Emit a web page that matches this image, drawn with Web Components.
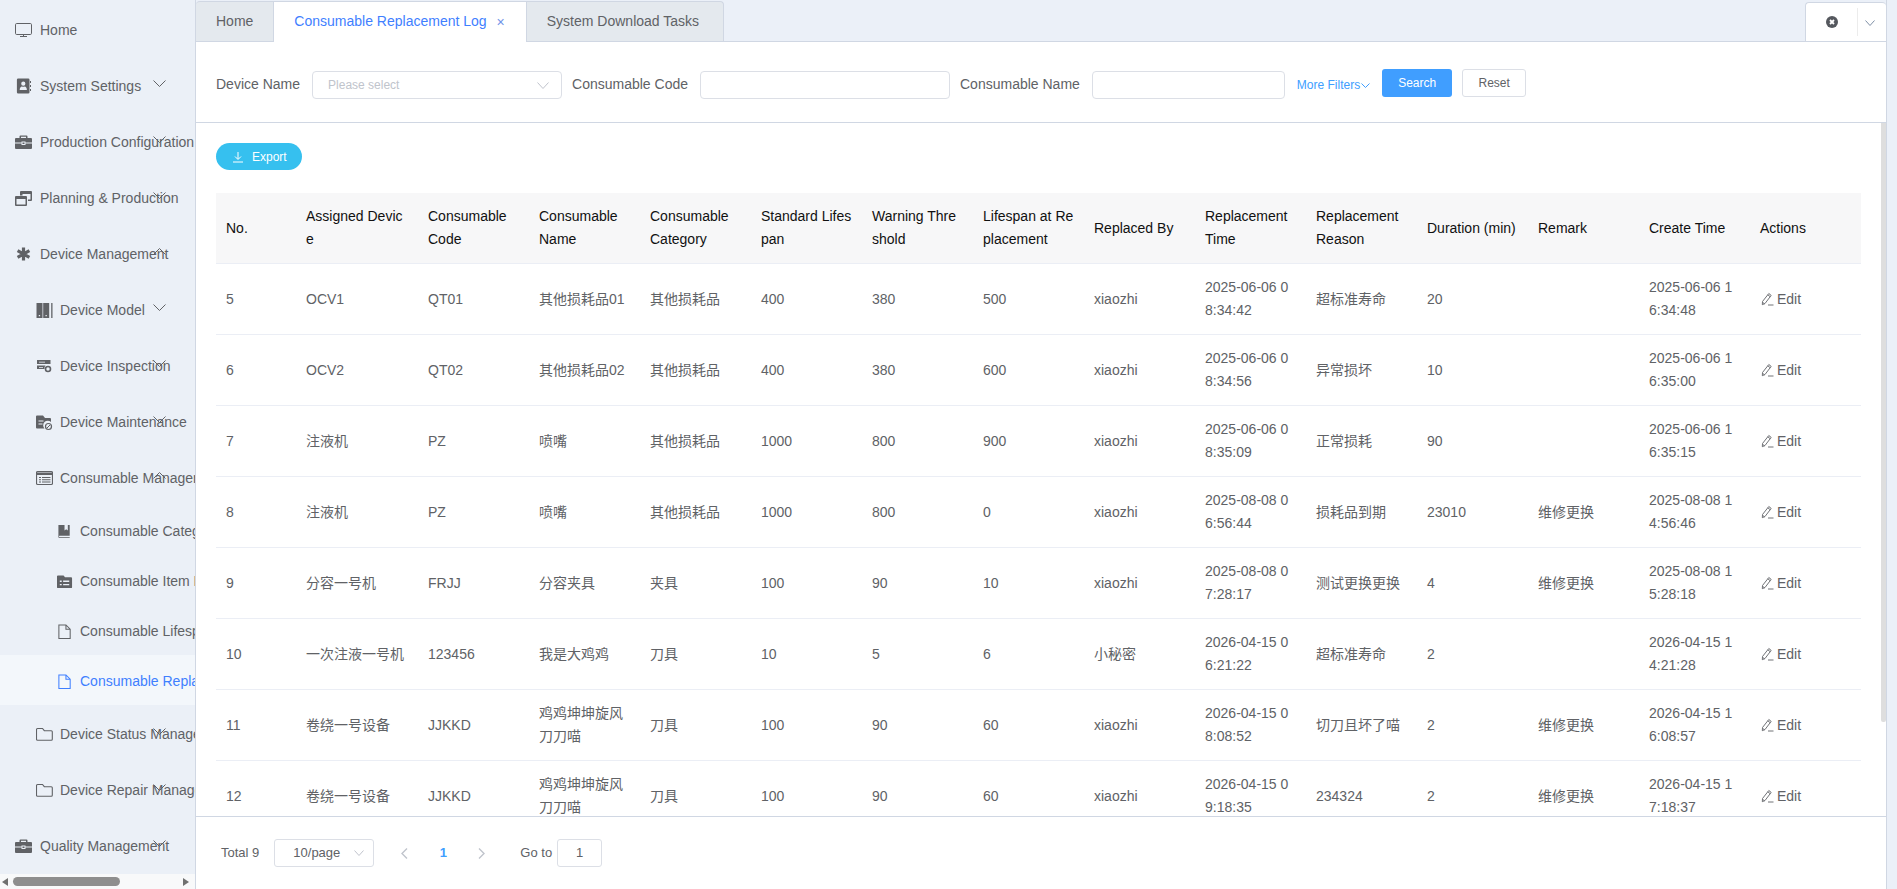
<!DOCTYPE html>
<html lang="en">
<head>
<meta charset="utf-8">
<title>Consumable Replacement Log</title>
<style>
  html, body { margin: 0; height: 100%; overflow: hidden; background: #ebf0f8; }
  body { font: 14px/1.4 "Liberation Sans", "Noto Sans CJK SC", sans-serif; color: #606266; }
</style>
</head>
<body>
<app-shell>
  <side-nav slot="nav">
    <nav-item icon="monitor">Home</nav-item>
    <nav-item icon="card" chevron="down">System Settings</nav-item>
    <nav-item icon="case" chevron="down">Production Configuration</nav-item>
    <nav-item icon="windows" chevron="down">Planning &amp; Production</nav-item>
    <nav-item icon="star" chevron="up">Device Management</nav-item>
    <nav-item icon="columns" level="2" chevron="down">Device Model</nav-item>
    <nav-item icon="server" level="2" chevron="down">Device Inspection</nav-item>
    <nav-item icon="folderfix" level="2" chevron="down">Device Maintenance</nav-item>
    <nav-item icon="listalt" level="2" chevron="up">Consumable Management</nav-item>
    <nav-item icon="book" level="3">Consumable Category</nav-item>
    <nav-item icon="folderlist" level="3">Consumable Item Ledger</nav-item>
    <nav-item icon="file" level="3">Consumable Lifespan</nav-item>
    <nav-item icon="file" level="3" active>Consumable Replacement Log</nav-item>
    <nav-item icon="folder" level="2" chevron="down">Device Status Management</nav-item>
    <nav-item icon="folder" level="2" chevron="down">Device Repair Management</nav-item>
    <nav-item icon="case" chevron="down">Quality Management</nav-item>
  </side-nav>
  <tab-bar slot="tabs"></tab-bar>
  <filter-bar slot="filters"></filter-bar>
  <log-table slot="content"></log-table>
  <page-footer slot="footer"></page-footer>
</app-shell>

<script>
const ICONS = {
  monitor: '<rect x="0.500" y="1.500" width="16" height="11" rx="1.200" fill="none" stroke="currentColor" stroke-width="1"/><path d="M8.500 12.500v1.500M5 14.500h7" stroke="currentColor" fill="none"/>',
  card: '<path fill-rule="evenodd" d="M3.200 0.500h10a1.300 1.300 0 0 1 1.300 1.300v12.400a1.300 1.300 0 0 1-1.300 1.300h-10a1.300 1.300 0 0 1-1.300-1.300V1.800a1.300 1.300 0 0 1 1.300-1.300zM8.300 3.600a2.100 2.100 0 1 0 0 4.200 2.100 2.100 0 0 0 0-4.200zM4.700 11.900h7.200c0-2.200-1.100-3.300-2.200-3.500-.8.500-2 .5-2.800 0-1.100.2-2.200 1.300-2.200 3.500z"/><path d="M15 3h1v2h-1zM15 7h1v2h-1zM15 11h1v2h-1z"/>',
  case: '<path d="M5.500 1.500h6a1 1 0 0 1 1 1V4H16a1 1 0 0 1 1 1v3.500H10.500V7.500h-4v1H0V5a1 1 0 0 1 1-1h3.500V2.500a1 1 0 0 1 1-1zm.5 1.200V4h5V2.700z"/><path d="M0 9.500h6.500v1.500h4V9.500H17V14a1 1 0 0 1-1 1H1a1 1 0 0 1-1-1z"/><path d="M7.500 8.500h2v1.500h-2z"/>',
  windows: '<path fill-rule="evenodd" d="M6 1h10a1 1 0 0 1 1 1v8a1 1 0 0 1-1 1h-3V9.500h2.500V4h-8v1.500H5V2a1 1 0 0 1 1-1z"/><path fill-rule="evenodd" d="M1 6h10a1 1 0 0 1 1 1v8a1 1 0 0 1-1 1H1a1 1 0 0 1-1-1V7a1 1 0 0 1 1-1zm.500 3v5.500h9V9z"/>',
  star: '<path d="M8.500 1.500v13M2.600 4.700l11.800 6.600M14.400 4.700L2.600 11.300" stroke="currentColor" stroke-width="3.200" fill="none"/>',
  columns: '<path d="M0.500 1h6v15h-6zM7.200 1h6v15h-6z"/><path d="M15.200 1h1.300v15h-1.300z"/><path d="M2.800 13h1.300v1.300H2.800zM9.500 13h1.300v1.300H9.500z" fill="#ebf0f7"/>',
  server: '<path fill-rule="evenodd" d="M1 2h13.500v4H1zM1 7.500h8.500a4 4 0 0 0-1 3.500H1z"/><circle cx="12" cy="11" r="2.500" fill="none" stroke="currentColor" stroke-width="1.600"/><path d="M3 3.700h6v.8H3zM3 9h4v.8H3z" fill="#ebf0f7"/>',
  folderfix: '<path d="M1 1.500h6l2 2.500h5a1 1 0 0 1 1 1v3a4.500 4.500 0 0 0-6.500 6.500H1a1 1 0 0 1-1-1V2.500a1 1 0 0 1 1-1z"/><path d="M2.500 6.500h5v1h-5zM2.500 9.500h4v1h-4z" fill="#ebf0f7"/><circle cx="12.500" cy="12.500" r="3" fill="none" stroke="currentColor" stroke-width="1.200"/><path d="M11 14l3-3" stroke="currentColor"/>',
  listalt: '<rect x="0.500" y="1.500" width="16" height="13" rx="1.200" fill="none" stroke="currentColor" stroke-width="1.200"/><path d="M0.500 2.500h16v2.500H.500z"/><path d="M3 7h2v1H3zM3 9.200h2v1H3zM3 11.400h2v1H3zM6 7h8.500v1H6zM6 9.200h8.500v1H6zM6 11.400h8.500v1H6z"/>',
  book: '<path d="M1.500 1h12v11.500h-11a1 1 0 0 0 0 1.500h11v1H2.500a1.500 1.500 0 0 1-1-1.300z"/><path d="M8 1h3.500v6L9.750 5.600 8 7z" fill="#ebf0f7"/>',
  folderlist: '<path fill-rule="evenodd" d="M1 1.500h6l1.500 2H15a1 1 0 0 1 1 1V14a1 1 0 0 1-1 1H1a1 1 0 0 1-1-1V2.500a1 1 0 0 1 1-1zM3 7v1.500h2V7zm3.500 0v1.500H13V7zM3 10.500V12h2v-1.500zm3.500 0V12H13v-1.500z"/>',
  file: '<path d="M2 1h7.500L14 5.500V15.500H2zM9.500 1v4.500H14" fill="none" stroke="currentColor" stroke-width="1.100"/>',
  folder: '<path d="M1.500 2.500h5l1.800 2.200h7a1 1 0 0 1 1 1v7.500a1 1 0 0 1-1 1h-13.800a1 1 0 0 1-1-1V3.500a1 1 0 0 1 1-1z" fill="none" stroke="currentColor" stroke-width="1.100"/>'
};

const chevronSvg = (dir, w, h, color) => {
  const pts = dir === 'up' ? `0.500,${h - 0.500} ${w / 2},0.500 ${w - 0.500},${h - 0.500}` : `0.500,0.500 ${w / 2},${h - 0.500} ${w - 0.500},0.500`;
  return `<svg width="${w}" height="${h}" viewBox="0 0 ${w} ${h}" style="display:block"><polyline points="${pts}" fill="none" stroke="${color}" stroke-width="1"/></svg>`;
};

class AppShell extends HTMLElement {
  constructor() {
    super();
    this.attachShadow({ mode: 'open' });
    this.shadowRoot.innerHTML = `
      <style>
        :host { display: flex; width: 1897px; height: 889px; overflow: hidden; }
        .nav { width: 195px; flex: none; }
        .main {
          width: 1690px; flex: none;
          border-left: 1px solid #d0d7e3; border-right: 1px solid #d0d7e3;
          display: flex; flex-direction: column; background: #fff;
        }
      </style>
      <div class="nav"><slot name="nav"></slot></div>
      <div class="main">
        <slot name="tabs"></slot>
        <slot name="filters"></slot>
        <slot name="content"></slot>
        <slot name="footer"></slot>
      </div>
    `;
  }
}

class SideNav extends HTMLElement {
  constructor() {
    super();
    this.attachShadow({ mode: 'open' });
    this.shadowRoot.innerHTML = `
      <style>
        :host { display: flex; flex-direction: column; width: 195px; height: 889px; background: #ebf0f7; overflow: hidden; }
        .list { flex: 1; min-height: 0; padding-top: 1px; overflow: hidden; }
        .hbar { flex: none; height: 15px; background: #f8f9fa; display: flex; align-items: center; justify-content: space-between; padding: 0 6px 0 2px; }
        .thumb { position: absolute; left: 13px; bottom: 3px; width: 107px; height: 9px; border-radius: 5px; background: #8e8e8e; }
        .tri-l { width: 0; height: 0; border: 4px solid transparent; border-left: 0; border-right: 6px solid #707070; }
        .tri-r { width: 0; height: 0; border: 4px solid transparent; border-right: 0; border-left: 6px solid #707070; }
      </style>
      <div class="list"><slot></slot></div>
      <div class="hbar"><span class="tri-l"></span><span class="thumb"></span><span class="tri-r"></span></div>
    `;
  }
}

class NavItem extends HTMLElement {
  constructor() {
    super();
    this.attachShadow({ mode: 'open' });
  }
  connectedCallback() {
    const level = this.getAttribute('level') || '1';
    const icon = ICONS[this.getAttribute('icon')] || '';
    const chevron = this.getAttribute('chevron');
    const pad = { 1: 15, 2: 36, 3: 57 }[level];
    const gap = { 1: 8, 2: 7, 3: 6 }[level];
    const size = level === '3' ? 16 : 17;
    const active = this.hasAttribute('active');
    this.shadowRoot.innerHTML = `
      <style>
        :host {
          display: flex; align-items: center; position: relative; white-space: nowrap; overflow: hidden;
          height: ${level === '3' ? 50 : 56}px; padding: 3px 0 0 ${pad}px; box-sizing: border-box;
          color: ${active ? '#3f7fff' : '#606266'};
          background: ${active ? '#f3f7fb' : 'transparent'};
        }
        svg.ic { flex: none; width: ${size}px; height: ${size}px; margin-right: ${gap + (17 - size)}px; fill: currentColor; }
        .ch { position: absolute; left: 153px; top: 50%; margin-top: -5px; }
      </style>
      <svg class="ic" viewBox="0 0 17 17">${icon}</svg><slot></slot>
      ${chevron ? `<span class="ch">${chevronSvg(chevron, 13, 7, '#606266')}</span>` : ''}
    `;
  }
}

class TabBar extends HTMLElement {
  constructor() {
    super();
    this.attachShadow({ mode: 'open' });
    this.shadowRoot.innerHTML = `
      <style>
        :host { display: flex; flex: none; height: 42px; box-sizing: border-box; border-bottom: 1px solid #d0d7e3; background: #ebf0f8; padding-top: 1px; }
        .tab {
          height: 40px; box-sizing: border-box; padding: 0 20px; display: flex; align-items: center;
          background: #e4e9ee; border-top: 1px solid #d0d7e3; border-right: 1px solid #d0d7e3; white-space: nowrap;
        }
        .tab.first { border-top-left-radius: 4px; }
        .tab.last { border-top-right-radius: 4px; padding-right: 24px; }
        .tab.on { background: #fff; color: #3f7fff; height: 41px; margin-bottom: -1px; padding-right: 21px; }
        .x { margin-left: 10px; font-size: 14px; line-height: 14px; color: #6f94e8; }
        .tools {
          margin-left: auto; width: 81px; height: 39px; margin-top: 1px; box-sizing: border-box; background: #fff;
          border: 1px solid #d0d7e3; border-bottom: 0; border-right: 0; border-top-left-radius: 4px; border-top-right-radius: 4px;
          display: flex; align-items: center; position: relative;
        }
        .close { margin-left: 20px; width: 12px; height: 12px; }
        .div { position: absolute; left: 51px; top: 5px; height: 28px; width: 1px; background: #ececec; }
        .down { position: absolute; left: 59px; top: 17px; }
      </style>
      <div class="tab first">Home</div>
      <div class="tab on">Consumable Replacement Log<span class="x">×</span></div>
      <div class="tab last">System Download Tasks</div>
      <div class="tools">
        <svg class="close" viewBox="0 0 12 12"><circle cx="6" cy="6" r="6" fill="#55585e"/><path d="M4 4l4 4M8 4l-4 4" stroke="#fff" stroke-width="1.800"/></svg>
        <span class="div"></span>
        <span class="down">${chevronSvg('down', 10, 6, '#7f8fa6')}</span>
      </div>
    `;
  }
}

class FormField extends HTMLElement {
  constructor() {
    super();
    this.attachShadow({ mode: 'open' });
  }
  connectedCallback() {
    const w = this.getAttribute('width');
    const isSelect = this.hasAttribute('select');
    this.shadowRoot.innerHTML = `
      <style>
        :host { display: flex; align-items: center; white-space: nowrap; margin-right: 10px; }
        .label { margin-right: 12px; }
        .box {
          width: ${w}px; height: 28px; box-sizing: border-box; border: 1px solid #dcdfe6; border-radius: 4px;
          display: flex; align-items: center; justify-content: space-between; padding: 0 12px 0 15px;
          font-size: 12px; color: #c0c4cc; background: #fff;
        }
      </style>
      <span class="label"><slot></slot></span>
      <div class="box">${isSelect ? `<span>Please select</span>${chevronSvg('down', 12, 7, '#c0c4cc')}` : ''}</div>
    `;
  }
}
customElements.define('form-field', FormField);

class FilterBar extends HTMLElement {
  constructor() {
    super();
    this.attachShadow({ mode: 'open' });
    this.shadowRoot.innerHTML = `
      <style>
        :host {
          display: flex; flex: none; align-items: center; height: 81px; box-sizing: border-box;
          padding: 6px 0 0 20px; border-bottom: 1px solid #d0d7e3; background: #fff;
        }
        .more { display: flex; align-items: center; gap: 1px; font-size: 12px; color: #409eff; margin: 1px 12px 0 2px; white-space: nowrap; }
        .btn {
          height: 28px; box-sizing: border-box; border-radius: 3px; font-size: 12px; display: flex; align-items: center;
          justify-content: center; margin-top: -4px;
        }
        .search { width: 70px; background: #409eff; color: #fff; margin-right: 10px; }
        .reset { width: 64px; border: 1px solid #dcdfe6; color: #606266; }
      </style>
      <form-field select width="250">Device Name</form-field>
      <form-field width="250">Consumable Code</form-field>
      <form-field width="193">Consumable Name</form-field>
      <span class="more">More Filters${chevronSvg('down', 9, 5, '#409eff')}</span>
      <div class="btn search">Search</div>
      <div class="btn reset">Reset</div>
    `;
  }
}

const COLUMNS = [
  ['No.', 80], ['Assigned Device', 122], ['Consumable Code', 111], ['Consumable Name', 111],
  ['Consumable Category', 111], ['Standard Lifespan', 111], ['Warning Threshold', 111],
  ['Lifespan at Replacement', 111], ['Replaced By', 111], ['Replacement Time', 111],
  ['Replacement Reason', 111], ['Duration (min)', 111], ['Remark', 111], ['Create Time', 111], ['Actions', 111]
];

const ROWS = [
  ['5', 'OCV1', 'QT01', '其他损耗品01', '其他损耗品', '400', '380', '500', 'xiaozhi', '2025-06-06 08:34:42', '超标准寿命', '20', '', '2025-06-06 16:34:48'],
  ['6', 'OCV2', 'QT02', '其他损耗品02', '其他损耗品', '400', '380', '600', 'xiaozhi', '2025-06-06 08:34:56', '异常损坏', '10', '', '2025-06-06 16:35:00'],
  ['7', '注液机', 'PZ', '喷嘴', '其他损耗品', '1000', '800', '900', 'xiaozhi', '2025-06-06 08:35:09', '正常损耗', '90', '', '2025-06-06 16:35:15'],
  ['8', '注液机', 'PZ', '喷嘴', '其他损耗品', '1000', '800', '0', 'xiaozhi', '2025-08-08 06:56:44', '损耗品到期', '23010', '维修更换', '2025-08-08 14:56:46'],
  ['9', '分容一号机', 'FRJJ', '分容夹具', '夹具', '100', '90', '10', 'xiaozhi', '2025-08-08 07:28:17', '测试更换更换', '4', '维修更换', '2025-08-08 15:28:18'],
  ['10', '一次注液一号机', '123456', '我是大鸡鸡', '刀具', '10', '5', '6', '小秘密', '2026-04-15 06:21:22', '超标准寿命', '2', '', '2026-04-15 14:21:28'],
  ['11', '卷绕一号设备', 'JJKKD', '鸡鸡坤坤旋风刀刀喵', '刀具', '100', '90', '60', 'xiaozhi', '2026-04-15 08:08:52', '切刀且坏了喵', '2', '维修更换', '2026-04-15 16:08:57'],
  ['12', '卷绕一号设备', 'JJKKD', '鸡鸡坤坤旋风刀刀喵', '刀具', '100', '90', '60', 'xiaozhi', '2026-04-15 09:18:35', '234324', '2', '维修更换', '2026-04-15 17:18:37']
];

class LogTable extends HTMLElement {
  constructor() {
    super();
    this.attachShadow({ mode: 'open' });
    const cols = COLUMNS.map(c => `<col style="width:${c[1]}px">`).join('');
    const head = COLUMNS.map(c => `<th>${c[0]}</th>`).join('');
    const pencil = '<svg class="pen" viewBox="0 0 13 14"><path d="M1.500 9.500L7.800 1.500l2.400 1.900L4 11.500l-2.700 1.200z M6.800 2.800l2.400 1.900M1.800 10.500l1.700 1.300" fill="none" stroke="currentColor" stroke-width="0.900"/><path d="M7 13h5.500" stroke="currentColor" stroke-width="0.900"/></svg>';
    const body = ROWS.map(r => `<tr>${r.map(v => `<td>${v}</td>`).join('')}<td><span class="edit">${pencil}Edit</span></td></tr>`).join('');
    this.shadowRoot.innerHTML = `
      <style>
        :host { display: block; flex: 1; min-height: 0; overflow: hidden; position: relative; padding: 20px 0 0 20px; box-sizing: border-box; background: #fff; }
        .export {
          width: 86px; height: 27px; box-sizing: border-box; border-radius: 14px; background: #36c0ef; color: #fff; font-size: 12px;
          display: flex; align-items: center; padding: 1px 0 0 16px; gap: 8px; margin-bottom: 23px;
        }
        table { border-collapse: separate; border-spacing: 0; table-layout: fixed; width: 1645px; line-height: 23px; word-break: break-all; }
        th { height: 71px; background: #f7f7f8; color: #111; font-weight: 400; text-align: left; padding: 0 10px; box-sizing: border-box; border-bottom: 1px solid #ebeef5; }
        td { height: 71px; padding: 0 10px; box-sizing: border-box; border-bottom: 1px solid #ebeef5; vertical-align: middle; }
        .edit { display: flex; align-items: center; gap: 3px; margin-left: 1px; white-space: nowrap; }
        .pen { width: 13px; height: 14px; }
        .bar { position: absolute; right: 0; top: 0; width: 5px; height: 599px; background: #dedede; border-radius: 0 0 2px 2px; }
      </style>
      <div class="export">
        <svg width="12" height="12" viewBox="0 0 12 12"><path d="M6 1v7M3 5.500L6 8.500 9 5.500M1 11h10" fill="none" stroke="#fff" stroke-width="1"/></svg>
        <span>Export</span>
      </div>
      <table>
        <colgroup>${cols}</colgroup>
        <thead><tr>${head}</tr></thead>
        <tbody>${body}</tbody>
      </table>
      <div class="bar"></div>
    `;
  }
}

class PageFooter extends HTMLElement {
  constructor() {
    super();
    this.attachShadow({ mode: 'open' });
    this.shadowRoot.innerHTML = `
      <style>
        :host {
          display: flex; flex: none; align-items: center; height: 73px; box-sizing: border-box; border-top: 1px solid #d0d7e3;
          padding: 0 0 0 25px; font-size: 13px; background: #fff; white-space: nowrap;
        }
        .size {
          width: 100px; height: 28px; box-sizing: border-box; margin-left: 15px; border: 1px solid #dcdfe6; border-radius: 3px;
          display: flex; align-items: center; justify-content: space-between; padding: 0 9px 0 18px;
        }
        .arrow { display: flex; justify-content: center; color: #c0c4cc; }
        .prev { width: 30px; margin-left: 15px; }
        .num { width: 48px; text-align: center; color: #409eff; font-weight: 700; }
        .next { width: 28px; }
        .go { margin-left: 25px; margin-right: 5px; }
        .jump { width: 45px; height: 28px; box-sizing: border-box; border: 1px solid #dcdfe6; border-radius: 3px; display: flex; align-items: center; justify-content: center; }
      </style>
      <span>Total 9</span>
      <div class="size"><span>10/page</span>${chevronSvg('down', 10, 6, '#c0c4cc')}</div>
      <span class="arrow prev"><svg width="7" height="11" viewBox="0 0 7 11"><path d="M6 .5L1 5.500 6 10.500" fill="none" stroke="#c0c4cc" stroke-width="1.400"/></svg></span>
      <span class="num">1</span>
      <span class="arrow next"><svg width="7" height="11" viewBox="0 0 7 11"><path d="M1 .5L6 5.500 1 10.500" fill="none" stroke="#c0c4cc" stroke-width="1.400"/></svg></span>
      <span class="go">Go to</span>
      <div class="jump">1</div>
    `;
  }
}

customElements.define('app-shell', AppShell);
customElements.define('side-nav', SideNav);
customElements.define('nav-item', NavItem);
customElements.define('tab-bar', TabBar);
customElements.define('filter-bar', FilterBar);
customElements.define('log-table', LogTable);
customElements.define('page-footer', PageFooter);
</script>
</body>
</html>
